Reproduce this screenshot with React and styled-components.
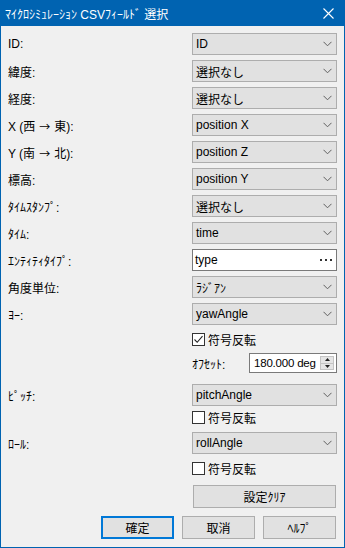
import React from "react";
import styled, { createGlobalStyle } from "styled-components";

const GlobalStyle = createGlobalStyle`
  html, body {
    margin: 0;
    padding: 0;
    background: #f0f0f0;
  }
  body {
    font-family: "Liberation Sans", "Noto Sans CJK JP", sans-serif;
    font-size: 12px;
    color: #000;
  }
`;

const Window = styled.div`
  width: 345px;
  height: 548px;
  box-sizing: border-box;
  border: 1px solid #0063b1;
  background: #f0f0f0;
  display: flex;
  flex-direction: column;
  overflow: hidden;
`;

const TitleBar = styled.div`
  height: 25px;
  flex-shrink: 0;
  background: #0063b1;
  color: #fff;
  display: flex;
  align-items: center;
  justify-content: space-between;
  padding-left: 4px;
`;

const Title = styled.span`
  font-size: 12px;
  white-space: nowrap;
`;

const CloseButton = styled.div`
  width: 30px;
  height: 25px;
  display: flex;
  align-items: center;
  justify-content: center;
  margin-right: 1px;
`;

const Body = styled.div`
  display: flex;
  flex-direction: column;
  padding: 7px 7px 0 7px;
`;

const Row = styled.div`
  display: flex;
  align-items: center;
  justify-content: space-between;
  height: ${({ h }) => h || 22}px;
  margin-top: ${({ mt }) => mt || 0}px;
`;

const Label = styled.span`
  white-space: nowrap;
`;

const Arrow = styled.span`
  font-family: "Noto Sans CJK JP", sans-serif;
  font-size: 11px;
  margin: 0 4px;
`;

const RightCell = styled.div`
  width: 145px;
  margin-left: auto;
  display: flex;
  align-items: center;
  height: 100%;
`;

const Combo = styled.div`
  box-sizing: border-box;
  width: 145px;
  height: 22px;
  border: 1px solid #adadad;
  background: #e1e1e1;
  display: flex;
  align-items: center;
  justify-content: space-between;
  padding: 0 4px 0 3px;
  white-space: nowrap;
`;

const TextBox = styled(Combo)`
  background: #fff;
  border-color: #7a7a7a;
  padding: 0 4px 0 2px;
`;

const CheckBox = styled.div`
  box-sizing: border-box;
  width: 13px;
  height: 13px;
  border: 1px solid #333;
  background: #fff;
  display: flex;
  align-items: center;
  justify-content: center;
  flex-shrink: 0;
`;

const CheckLabel = styled.span`
  margin-left: 3px;
  font-size: 12px;
`;

const SpinBox = styled.div`
  box-sizing: border-box;
  width: 88px;
  height: 20px;
  margin-left: auto;
  border: 1px solid #7a7a7a;
  background: #fff;
  display: flex;
  align-items: center;
  justify-content: space-between;
  padding: 0 2px 0 4px;
  white-space: nowrap;
  font-size: 11.5px;
  letter-spacing: -0.2px;
`;

const SpinButtons = styled.div`
  display: flex;
  flex-direction: column;
  width: 14px;
  height: 14px;
  flex-shrink: 0;
`;

const SpinHalf = styled.div`
  box-sizing: border-box;
  flex: 1;
  border: 1px solid #c4c4c4;
  background: #e5e5e5;
  display: flex;
  align-items: center;
  justify-content: center;
  & + & {
    border-top: none;
  }
`;

const Button = styled.div`
  box-sizing: border-box;
  width: ${({ w }) => w || 73}px;
  height: 23px;
  border: ${({ primary }) => (primary ? "2px solid #0078d7" : "1px solid #adadad")};
  background: #e1e1e1;
  display: flex;
  align-items: center;
  justify-content: center;
`;

const ButtonRow = styled.div`
  display: flex;
  justify-content: flex-end;
  gap: 8px;
  margin-top: ${({ mt }) => mt || 0}px;
  margin-right: 1px;
`;

const Chevron = () => (
  <svg width="9" height="6" viewBox="0 0 9 6">
    <path d="M0.5 0.8 L4.5 4.8 L8.5 0.8" fill="none" stroke="#606060" strokeWidth="1" />
  </svg>
);

const Dots = () => (
  <svg width="12" height="3" viewBox="0 0 12 3">
    <rect x="0" y="0" width="2" height="2" fill="#333" />
    <rect x="5" y="0" width="2" height="2" fill="#333" />
    <rect x="10" y="0" width="2" height="2" fill="#333" />
  </svg>
);

const Field = ({ label, value, mt, text }) => (
  <Row mt={mt}>
    <Label>{label}</Label>
    {text ? (
      <TextBox>
        <span>{value}</span>
        <Dots />
      </TextBox>
    ) : (
      <Combo>
        <span>{value}</span>
        <Chevron />
      </Combo>
    )}
  </Row>
);

const Check = ({ checked, mt }) => (
  <Row h={13} mt={mt}>
    <RightCell>
      <CheckBox>
        {checked && (
          <svg width="11" height="11" viewBox="0 0 11 11">
            <path d="M1.5 5.5 L4.2 8.3 L9.5 2.2" fill="none" stroke="#222" strokeWidth="1.1" />
          </svg>
        )}
      </CheckBox>
      <CheckLabel>符号反転</CheckLabel>
    </RightCell>
  </Row>
);

const fields = [
  ["ID:", "ID"],
  ["緯度:", "選択なし"],
  ["経度:", "選択なし"],
  [<>X (西<Arrow>→</Arrow>東):</>, "position X"],
  [<>Y (南<Arrow>→</Arrow>北):</>, "position Z"],
  ["標高:", "position Y"],
  ["ﾀｲﾑｽﾀﾝﾌﾟ:", "選択なし"],
  ["ﾀｲﾑ:", "time"],
  ["ｴﾝﾃｨﾃｨﾀｲﾌﾟ:", "type", true],
  ["角度単位:", "ﾗｼﾞｱﾝ"],
  ["ﾖｰ:", "yawAngle"],
];

export default function App() {
  return (
    <>
      <GlobalStyle />
      <Window>
        <TitleBar>
          <Title>ﾏｲｸﾛｼﾐｭﾚｰｼｮﾝ CSVﾌｨｰﾙﾄﾞ 選択</Title>
          <CloseButton>
            <svg width="11" height="11" viewBox="0 0 11 11">
              <path d="M0.5 0.5 L10.5 10.5 M10.5 0.5 L0.5 10.5" stroke="#fff" strokeWidth="1.1" />
            </svg>
          </CloseButton>
        </TitleBar>
        <Body>
          {fields.map(([label, value, text], i) => (
            <Field key={i} label={label} value={value} text={text} mt={i === 0 ? 0 : 5} />
          ))}
          <Check checked mt={8} />
          <Row h={20} mt={7}>
            <RightCell>
              <Label>ｵﾌｾｯﾄ:</Label>
              <SpinBox>
                <span>180.000 deg</span>
                <SpinButtons>
                  <SpinHalf>
                    <svg width="5" height="3" viewBox="0 0 5 3">
                      <path d="M0 3 L2.5 0 L5 3 Z" fill="#222" />
                    </svg>
                  </SpinHalf>
                  <SpinHalf>
                    <svg width="5" height="3" viewBox="0 0 5 3">
                      <path d="M0 0 L2.5 3 L5 0 Z" fill="#222" />
                    </svg>
                  </SpinHalf>
                </SpinButtons>
              </SpinBox>
            </RightCell>
          </Row>
          <Field label="ﾋﾟｯﾁ:" value="pitchAngle" mt={11} />
          <Check mt={5} />
          <Field label="ﾛｰﾙ:" value="rollAngle" mt={8} />
          <Check mt={8} />
          <ButtonRow mt={10}>
            <Button w={143}>設定ｸﾘｱ</Button>
          </ButtonRow>
          <ButtonRow mt={8}>
            <Button primary>確定</Button>
            <Button>取消</Button>
            <Button>ﾍﾙﾌﾟ</Button>
          </ButtonRow>
        </Body>
      </Window>
    </>
  );
}
